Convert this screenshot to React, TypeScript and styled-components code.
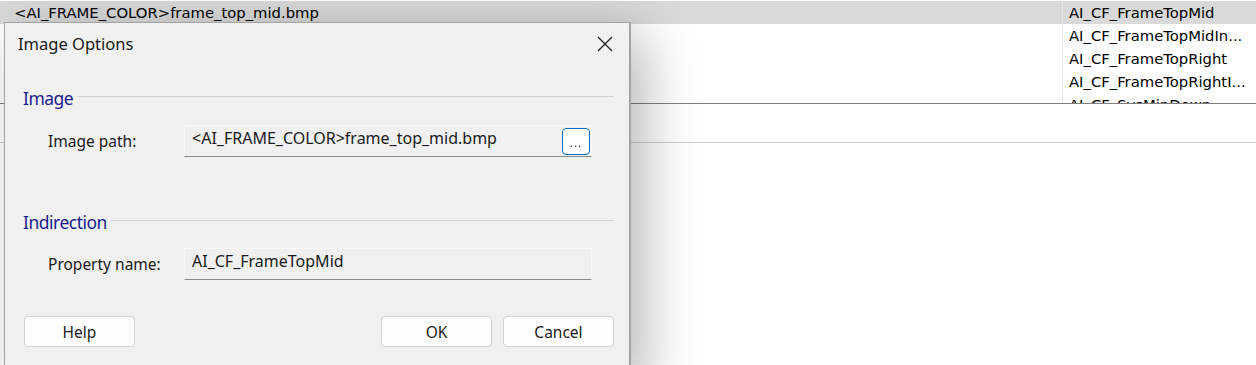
import styled, { createGlobalStyle } from 'styled-components'

const GlobalStyle = createGlobalStyle`
  html, body { margin: 0; padding: 0; background: #ffffff; }
  * { box-sizing: border-box; }
`

const listRows = [
  'AI_CF_FrameTopMid',
  'AI_CF_FrameTopMidIn...',
  'AI_CF_FrameTopRight',
  'AI_CF_FrameTopRightI...',
  'AI_CF_SysMinDown',
]

const Screen = styled.div`
  position: relative;
  width: 1256px;
  height: 365px;
  overflow: hidden;
  background: #ffffff;
  font-family: 'DejaVu Sans', Tahoma, sans-serif;
`

const ListPane = styled.div`
  height: 104px;
  padding-top: 1px;
  border-bottom: 1px solid #7f7f7f;
  display: grid;
  grid-template-columns: 1062px 1px 1fr;
  overflow: hidden;
`

const Column = styled.div`
  display: flex;
  flex-direction: column;
  min-width: 0;
`

const Separator = styled.div`
  background: #e3e8ee;
`

const ListRow = styled.div<{ $selected?: boolean; $pad: number }>`
  height: 23px;
  flex-shrink: 0;
  line-height: 23px;
  padding-left: ${(p) => p.$pad}px;
  font-size: 14.8px;
  color: #000;
  white-space: nowrap;
  background: ${(p) => (p.$selected ? '#d9d9d9' : 'transparent')};
`

const Strip = styled.div`
  height: 39px;
  border-bottom: 1px solid #cfcfcf;
`

const Window = styled.div`
  position: absolute;
  left: 4px;
  top: 22px;
  width: 627px;
  height: 360px;
  background: #f0f0f0;
  border: 1px solid #a3a3a3;
  border-right-width: 2px;
  box-shadow: 14px 12px 50px rgba(0, 0, 0, 0.28);
  font-family: 'Noto Sans', 'Segoe UI', sans-serif;
  color: #1a1a1a;
  display: flex;
  flex-direction: column;
`

const TitleBar = styled.div`
  height: 44px;
  display: flex;
  align-items: center;
  justify-content: space-between;
  padding: 0 16px 3px 13px;
  background: #f1f1f1;
`

const Title = styled.span`
  font-size: 16.5px;
  color: #1a1a1a;
`

const CloseButton = styled.div`
  width: 16px;
  height: 16px;
  margin-top: 1px;
  display: flex;
  align-items: center;
  justify-content: center;
`

const Body = styled.div`
  flex: 1;
  padding: 19px 15px 0 18px;
  display: flex;
  flex-direction: column;
`

const GroupHeader = styled.div<{ $top: number }>`
  margin-top: ${(p) => p.$top}px;
  display: flex;
  align-items: center;
  gap: 4px;
  height: 24px;
  color: #1c1c8c;
  font-size: 17.5px;
  letter-spacing: -0.5px;

  &::after {
    content: '';
    flex: 1;
    height: 1px;
    margin-top: -4px;
    background: #d2d2d2;
  }
`

const FieldRow = styled.div<{ $top: number }>`
  margin-top: ${(p) => p.$top}px;
  display: flex;
  align-items: center;
`

const Label = styled.span`
  width: 161px;
  padding-left: 25px;
  font-size: 15.5px;
`

const Field = styled.div`
  width: 408px;
  height: 32px;
  display: flex;
  align-items: center;
  justify-content: space-between;
  padding: 0 1px 0 7px;
  background: #f0f0f0;
  border: 1px solid #f9f9f9;
  border-bottom: 1px solid #8a8a8a;
  font-size: 16px;
  color: #1a1a1a;
`

const FieldText = styled.span`
  margin-top: -6px;
`

const BrowseButton = styled.div`
  width: 28px;
  height: 27px;
  background: #ffffff;
  border: 1px solid #0a6cc4;
  border-radius: 4px;
  font-size: 11px;
  display: flex;
  align-items: flex-end;
  justify-content: center;
  padding-bottom: 4px;
  letter-spacing: 1px;
`

const ButtonBar = styled.div`
  margin-top: 36px;
  margin-left: 1px;
  display: flex;
  gap: 11px;
`

const Button = styled.div<{ $pushRight?: boolean }>`
  width: 111px;
  height: 31px;
  margin-left: ${(p) => (p.$pushRight ? 'auto' : '0')};
  background: #fdfdfd;
  border: 1px solid #d3d3d3;
  border-radius: 4px;
  display: flex;
  align-items: center;
  justify-content: center;
  font-size: 15.5px;
  color: #1a1a1a;
`

function CloseIcon() {
  return (
    <svg width="16" height="16" viewBox="0 0 16 16">
      <path d="M1 1L15 15M15 1L1 15" stroke="#1a1a1a" strokeWidth="1.2" fill="none" />
    </svg>
  )
}

export default function App() {
  return (
    <>
      <GlobalStyle />
      <Screen>
        <ListPane>
          <Column>
            <ListRow $selected $pad={14}>
              {'<AI_FRAME_COLOR>frame_top_mid.bmp'}
            </ListRow>
          </Column>
          <Separator />
          <Column>
            {listRows.map((name, i) => (
              <ListRow key={name} $selected={i === 0} $pad={6}>
                {name}
              </ListRow>
            ))}
          </Column>
        </ListPane>
        <Strip />

        <Window>
          <TitleBar>
            <Title>Image Options</Title>
            <CloseButton>
              <CloseIcon />
            </CloseButton>
          </TitleBar>
          <Body>
            <GroupHeader $top={0}>Image</GroupHeader>
            <FieldRow $top={15}>
              <Label>Image path:</Label>
              <Field>
                <FieldText>{'<AI_FRAME_COLOR>frame_top_mid.bmp'}</FieldText>
                <BrowseButton>...</BrowseButton>
              </Field>
            </FieldRow>
            <GroupHeader $top={53}>Indirection</GroupHeader>
            <FieldRow $top={14}>
              <Label>Property name:</Label>
              <Field>
                <FieldText>AI_CF_FrameTopMid</FieldText>
              </Field>
            </FieldRow>
            <ButtonBar>
              <Button>Help</Button>
              <Button $pushRight>OK</Button>
              <Button>Cancel</Button>
            </ButtonBar>
          </Body>
        </Window>
      </Screen>
    </>
  )
}
